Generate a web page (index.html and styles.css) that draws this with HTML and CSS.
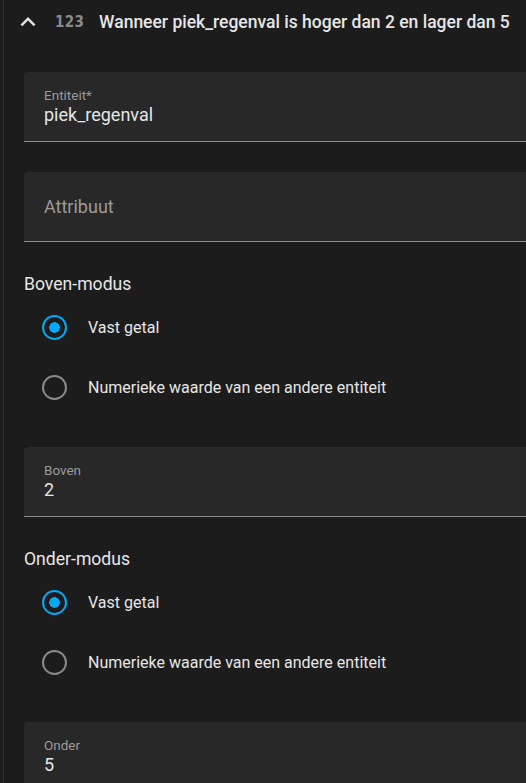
FILE: index.html
```html
<!DOCTYPE html>
<html lang="nl">
<head>
<meta charset="utf-8">
<link rel="stylesheet" href="styles.css">
</head>
<body>
<div class="panel">
  <div class="header">
    <svg class="chevron" width="30" height="30" viewBox="0 0 24 24"><path d="M7.41 15.41L12 10.83l4.59 4.58L18 14l-6-6-6 6z" fill="#e1e1e1"/></svg>
    <span class="numicon">123</span>
    <span class="title">Wanneer piek_regenval is hoger dan 2 en lager dan 5</span>
  </div>
  <div class="content">
    <div class="field">
      <span class="label">Entiteit*</span>
      <span class="value">piek_regenval</span>
    </div>
    <div class="field placeholder-field">
      <span class="placeholder">Attribuut</span>
    </div>
    <div class="group">
      <div class="group-title">Boven-modus</div>
      <div class="radio-row"><span class="radio checked"></span><span class="radio-label">Vast getal</span></div>
      <div class="radio-row"><span class="radio"></span><span class="radio-label">Numerieke waarde van een andere entiteit</span></div>
    </div>
    <div class="field">
      <span class="label">Boven</span>
      <span class="value">2</span>
    </div>
    <div class="group">
      <div class="group-title">Onder-modus</div>
      <div class="radio-row"><span class="radio checked"></span><span class="radio-label">Vast getal</span></div>
      <div class="radio-row"><span class="radio"></span><span class="radio-label">Numerieke waarde van een andere entiteit</span></div>
    </div>
    <div class="field">
      <span class="label">Onder</span>
      <span class="value">5</span>
    </div>
  </div>
</div>
</body>
</html>
```
FILE: styles.css
```css
html, body {
  margin: 0;
  padding: 0;
  background: #1c1c1c;
  height: 100%;
  overflow: hidden;
}
body {
  font-family: Roboto, "Liberation Sans", sans-serif;
  color: #e1e1e1;
}
.panel {
  margin-left: 3px;
  border-left: 1px solid #2f2f2f;
  min-height: 783px;
}
.header {
  display: flex;
  align-items: center;
  height: 44px;
  padding-left: 9px;
}
.chevron {
  width: 30px;
  height: 30px;
  flex: none;
}
.numicon {
  margin-left: 12px;
  font-family: "DejaVu Sans Condensed", "DejaVu Sans", sans-serif;
  font-weight: bold;
  font-size: 15px;
  color: #8a8a8a;
  letter-spacing: 0.3px;
}
.title {
  margin-left: 15px;
  font-size: 17.5px;
  font-weight: 500;
  color: #e6e6e6;
}
.content {
  display: flex;
  flex-direction: column;
  padding: 28px 0 0 20px;
  gap: 30px;
}
.field {
  box-sizing: border-box;
  height: 70px;
  background: #282828;
  border-radius: 4px 0 0 0;
  border-bottom: 1px solid #8c8c8c;
  display: flex;
  flex-direction: column;
  justify-content: flex-start;
  padding: 15px 20px 0;
}
.label {
  font-size: 13.5px;
  color: #9b9b9b;
  line-height: 16px;
}
.value {
  font-size: 18px;
  color: #e6e6e6;
  line-height: 24px;
}
.placeholder-field {
  padding-top: 0;
  justify-content: center;
}
.placeholder {
  font-size: 18px;
  color: #9b9b9b;
}
.group {
  display: flex;
  flex-direction: column;
}
.group-title {
  font-size: 17.6px;
  color: #e6e6e6;
  line-height: 25px;
  height: 25px;
}
.radio-row {
  display: flex;
  align-items: center;
  height: 60px;
  padding-left: 18px;
}
.radio {
  box-sizing: border-box;
  width: 25px;
  height: 25px;
  border-radius: 50%;
  border: 2px solid #8a8a8a;
  flex: none;
}
.radio.checked {
  border-color: #03a9f4;
  background: radial-gradient(circle, #03a9f4 0 5px, transparent 5.5px);
}
.radio-label {
  margin-left: 21px;
  font-size: 16px;
  color: #e6e6e6;
}
```
